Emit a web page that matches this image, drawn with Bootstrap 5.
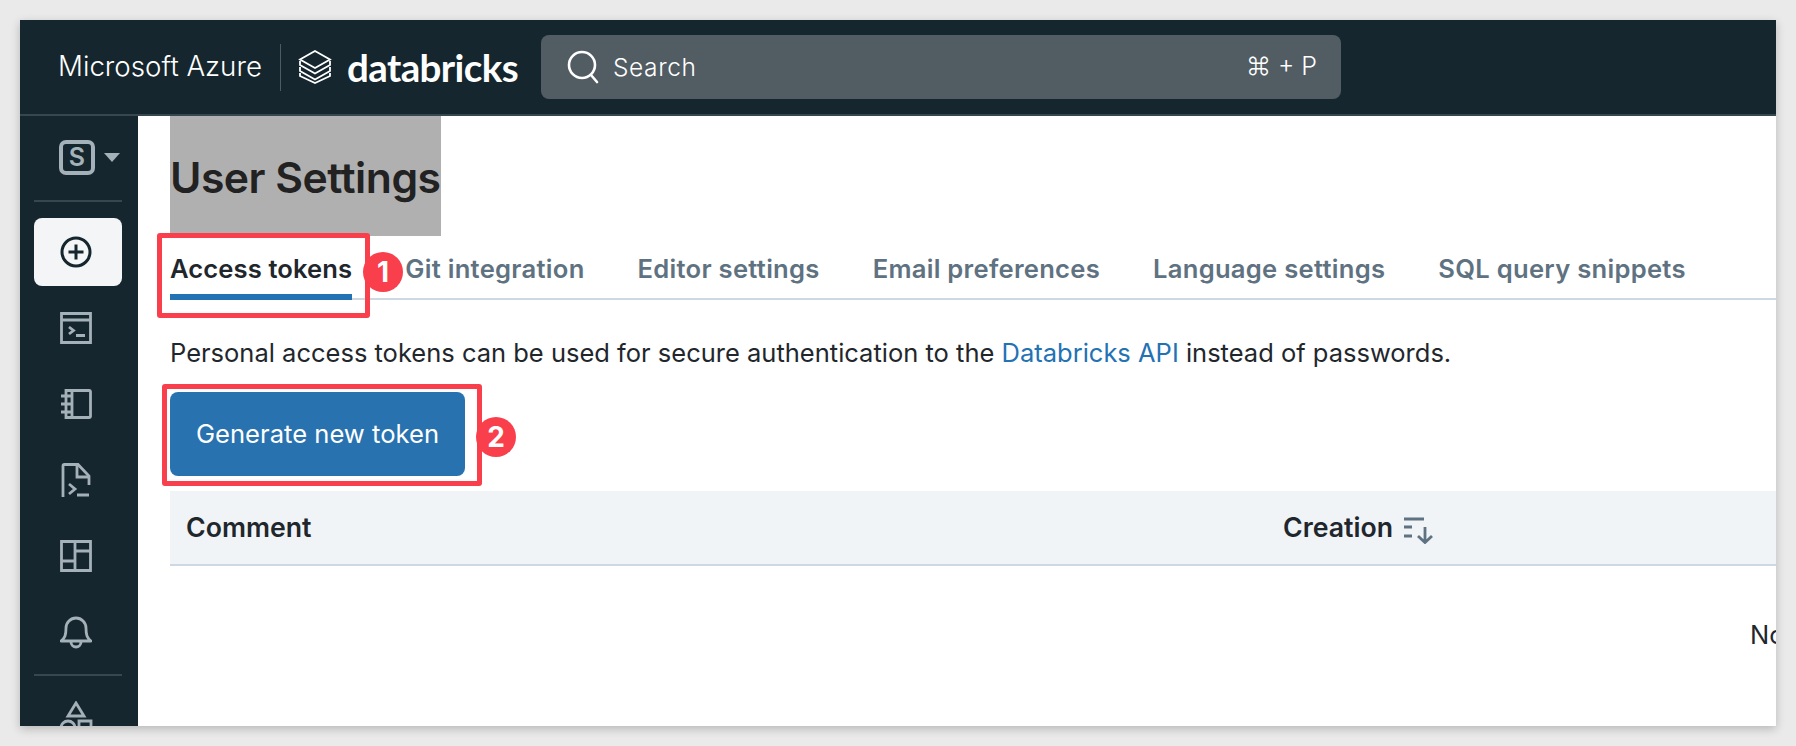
<!DOCTYPE html>
<html lang="en">
<head>
  <title>User Settings</title>
  <meta charset="UTF-8" />
  <meta name="viewport" content="width=device-width, initial-scale=1" />
  <link href="https://cdn.jsdelivr.net/npm/bootstrap@5.3.0/dist/css/bootstrap.min.css" rel="stylesheet" />
  <style>
    html, body { height: 100%; }
    body { background-color: #eaeaea; font-family: Inter, "Liberation Sans", sans-serif; color: #1f272d; padding: 20px; overflow: hidden; }
    .frame { position: relative; width: 1756px; height: 706px; overflow: hidden; background: #fff; box-shadow: 0 3px 9px rgba(0,0,0,.22); }

    .topbar { height: 96px; background: #15262e; border-bottom: 2px solid #37474f; padding-left: 38px; flex-shrink: 0; }
    .azure { font-size: 27.700px; font-weight: 300; color: #fff; width: 222px; white-space: nowrap; }
    .topbar-sep { width: 1px; height: 47px; background: #4d5c64; margin-right: 17px; }
    .brand-name { font-family: Lato, sans-serif; font-size: 38.500px; font-weight: 700; color: #fff; letter-spacing: -.6px; margin-left: 15px; line-height: 1; width: 194px; }
    .search-box { width: 800px; height: 64px; background: #525c63; border-radius: 8px; color: #fff; padding: 0 24px 0 26px; font-size: 24.500px; font-weight: 300; }
    .search-box .hint { font-size: 25px; }
    .search-label { letter-spacing: .6px; margin-left: 14px; }

    .rail { width: 118px; background: #15262e; flex-shrink: 0; padding-right: 2px; }
    .space-btn { padding-top: 24px; height: 84px; margin-left: 39px; flex-shrink: 0; }
    .space-s { width: 36px; height: 35px; border: 4px solid #a5b1b8; border-radius: 7px; color: #a5b1b8; font-size: 25px; font-weight: 600; line-height: 1; }
    .space-caret { width: 0; height: 0; border-left: 8px solid transparent; border-right: 8px solid transparent; border-top: 9px solid #a5b1b8; margin: 13px 0 0 9px; }
    .rail-line { width: 88px; height: 2px; background: #37474f; flex-shrink: 0; }
    .new-btn { width: 88px; height: 68px; background: #f4f5f7; border: 0; border-radius: 8px; margin: 16px 0 4px; padding: 0 4px 0 0; flex-shrink: 0; }
    .rail-item { height: 76px; flex-shrink: 0; margin-right: 4px; }
    .rail-line.lower { margin-top: 4px; }
    .rail-shape { margin: 25px 4px 0 0; flex-shrink: 0; }

    .main-area { padding-left: 32px; min-width: 0; }
    .page-title { display: inline-block; width: 271px; height: 120px; background: #b0b0b0; color: #222; font-size: 42.700px; font-weight: 600; letter-spacing: -.5px; line-height: 124px; margin: 0; white-space: nowrap; vertical-align: top; }
    .tab-row { height: 64px; border-bottom: 2px solid #cdd8e2; gap: 53px; flex-wrap: nowrap; }
    .tab-link { display: block; height: 64px; padding: 17px 0 0; font-size: 25.600px; font-weight: 600; color: #5f7281; letter-spacing: .27px; white-space: nowrap; line-height: 32px; text-decoration: none; }
    .tab-link.on { color: #1f272d; border-bottom: 6px solid #2272b4; letter-spacing: .1px; }
    .intro { font-size: 25.500px; line-height: 32px; margin: 37px 0 23px; white-space: nowrap; }
    .intro a { color: #2272b4; text-decoration: none; }
    .make-btn { height: 84px; width: 295px; background: #2872b0; border: 0; border-radius: 8px; color: #fff; font-size: 25.600px; font-weight: 400; padding: 0; display: block; }
    .token-table { width: 1606px; table-layout: fixed; margin: 15px 0 0; border-collapse: collapse; }
    .token-table th { height: 74px; background: #f0f4f7; border-bottom: 2px solid #cdd8e2; font-size: 26.700px; font-weight: 600; color: #1f272d; padding: 0 0 0 16px; vertical-align: middle; }
    .token-table th.c-comment { width: 1097px; }
    .token-table td { border: 0; padding: 50px 0 0 1580px; font-size: 25.500px; white-space: nowrap; overflow: hidden; }

    .mark-box { position: absolute; border: 5px solid #f93e4c; border-radius: 3px; }
    .mark-box.one { left: 137px; top: 213px; width: 213px; height: 85px; }
    .mark-box.two { left: 142px; top: 364px; width: 320px; height: 102px; }
    .mark-dot { position: absolute; width: 40px; height: 40px; border-radius: 50%; background: #f93e4c; color: #fff; font-size: 28px; font-weight: 700; line-height: 40px; text-align: center; }
    .mark-dot.one { left: 343px; top: 232px; }
    .mark-dot.two { left: 456px; top: 397px; }
  </style>
</head>
<body>

<div class="frame d-flex flex-column">
  <header class="topbar d-flex align-items-center">
    <span class="azure">Microsoft Azure</span>
    <span class="topbar-sep"></span>
    <svg width="34" height="34" viewBox="0 0 34 34" fill="none" stroke="#fff" stroke-width="1.8" stroke-linejoin="miter">
      <path d="M17 1 32 9.500 17 18 2 9.500Z"/>
      <path d="M2 11v4l15 8.500L32 15v-4"/>
      <path d="M2 17v4l15 8.500L32 21v-4"/>
      <path d="M2 23v3l15 7 15-7v-3"/>
    </svg>
    <span class="brand-name">databricks</span>
    <div class="search-box d-flex align-items-center">
      <svg width="32" height="34" viewBox="0 0 32 34" fill="none" stroke="#fff" stroke-width="2.600">
        <circle cx="15" cy="15" r="13"/>
        <path d="M24 25l6 7" stroke-linecap="round"/>
      </svg>
      <span class="search-label">Search</span>
      <span class="hint ms-auto">⌘ + P</span>
    </div>
  </header>

  <div class="d-flex flex-grow-1" style="min-height:0">
    <nav class="rail d-flex flex-column align-items-center">
      <div class="space-btn d-flex align-items-start align-self-start">
        <span class="space-s d-flex align-items-center justify-content-center">S</span>
        <span class="space-caret"></span>
      </div>
      <span class="rail-line"></span>
      <button class="new-btn d-flex align-items-center justify-content-center" aria-label="New">
        <svg width="32" height="32" viewBox="0 0 32 32" fill="none" stroke="#15262e" stroke-width="3">
          <circle cx="16" cy="16" r="14"/>
          <path d="M16 8.500v15M8.500 16h15"/>
        </svg>
      </button>
      <a class="rail-item d-flex align-items-center" href="#" aria-label="Terminal">
        <svg width="32" height="32" viewBox="0 0 32 32" fill="none" stroke="#a5b1b8" stroke-width="2.800">
          <path d="M1.500 1.500h29v29h-29zM1.500 8h29"/>
          <path d="M9 15l4.500 3.500L9 22M16 23.500h9"/>
        </svg>
      </a>
      <a class="rail-item d-flex align-items-center" href="#" aria-label="Notebook">
        <svg width="32" height="30" viewBox="0 0 32 30" fill="none" stroke="#a5b1b8" stroke-width="2.800">
          <path d="M6 1.500h23a1.500 1.500 0 0 1 1.500 1.500v24a1.500 1.500 0 0 1-1.500 1.500H6zM12 1.500v27"/>
          <path d="M1 7h10M1 15h10M1 23h10"/>
        </svg>
      </a>
      <a class="rail-item d-flex align-items-center" href="#" aria-label="Query">
        <svg width="30" height="35" viewBox="0 0 30 35" fill="none" stroke="#a5b1b8" stroke-width="2.800">
          <path d="M2 34V3a1.500 1.500 0 0 1 1.500-1.500H17L28 13v9"/>
          <path d="M16 2v12h12"/>
          <path d="M8 21l6 5-6 5M16 32h12"/>
        </svg>
      </a>
      <a class="rail-item d-flex align-items-center" href="#" aria-label="Dashboards">
        <svg width="32" height="32" viewBox="0 0 32 32" fill="none" stroke="#a5b1b8" stroke-width="2.800">
          <path d="M1.500 1.500h29v29h-29zM15 1.500v29M1.500 21h13.500M15 11h15.500"/>
        </svg>
      </a>
      <a class="rail-item d-flex align-items-center" href="#" aria-label="Alerts">
        <svg width="32" height="34" viewBox="0 0 32 34" fill="none" stroke="#a5b1b8" stroke-width="2.800">
          <path d="M1 26c4-3 5-6 5-13a10 10 0 0 1 20 0c0 7 1 10 5 13z" stroke-linejoin="round"/>
          <path d="M11 27a5 5 0 0 0 10 0"/>
        </svg>
      </a>
      <span class="rail-line lower"></span>
      <svg class="rail-shape" width="34" height="34" viewBox="0 0 34 34" fill="none" stroke="#a5b1b8" stroke-width="2.800">
        <path d="M17 2 25 15H9Z"/>
        <circle cx="9" cy="27" r="7"/>
        <path d="M20 20h12v12H20z"/>
      </svg>
    </nav>

    <main class="main-area flex-grow-1">
      <h1 class="page-title">User Settings</h1>
      <ul class="nav tab-row">
        <li class="nav-item"><a class="tab-link on" href="#">Access tokens</a></li>
        <li class="nav-item"><a class="tab-link" href="#">Git integration</a></li>
        <li class="nav-item"><a class="tab-link" href="#">Editor settings</a></li>
        <li class="nav-item"><a class="tab-link" href="#">Email preferences</a></li>
        <li class="nav-item"><a class="tab-link" href="#">Language settings</a></li>
        <li class="nav-item"><a class="tab-link" href="#">SQL query snippets</a></li>
      </ul>
      <p class="intro">Personal access tokens can be used for secure authentication to the <a href="#">Databricks API</a> instead of passwords.</p>
      <button class="make-btn">Generate new token</button>
      <table class="token-table">
        <thead>
          <tr>
            <th class="c-comment">Comment</th>
            <th>Creation
              <svg class="ms-1" width="30" height="27" viewBox="0 0 30 27" fill="none" stroke="#5f7281" stroke-width="2.800">
                <path d="M0 2h20M0 10h8M0 19h8"/>
                <path d="M21 10v15M14 19l7 6.500 7-6.500"/>
              </svg>
            </th>
          </tr>
        </thead>
        <tbody>
          <tr><td colspan="2">No</td></tr>
        </tbody>
      </table>
    </main>
  </div>

  <span class="mark-box one"></span>
  <span class="mark-dot one">1</span>
  <span class="mark-box two"></span>
  <span class="mark-dot two">2</span>
</div>

<script src="https://cdn.jsdelivr.net/npm/bootstrap@5.3.0/dist/js/bootstrap.bundle.min.js"></script>
</body>
</html>
